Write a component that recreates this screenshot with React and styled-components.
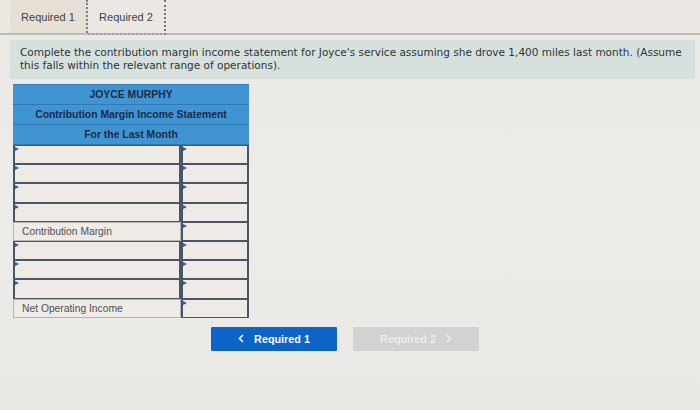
import styled, { createGlobalStyle } from "styled-components";

const Global = createGlobalStyle`
  html, body { margin: 0; padding: 0; background: #ebe9e5; }
  body { width: 700px; height: 410px; overflow: hidden; font-family: "Liberation Sans", Arial, sans-serif; }
`;

const Page = styled.div`
  width: 700px;
  height: 410px;
  display: flex;
  flex-direction: column;
  background: linear-gradient(180deg, #ebe8e3 0%, #edece9 50%, #e9e8e5 100%);
`;

const TabBar = styled.div`
  display: flex;
  height: 33px;
  padding-left: 10px;
  border-bottom: 2px solid #b9bcb8;
`;

const Tab = styled.div`
  width: 76px;
  display: flex;
  align-items: center;
  justify-content: center;
  font-size: 11px;
  color: #3f3f3f;
  background: ${(p) => (p.active ? "#e6dfd6" : "transparent")};
  border-right: ${(p) => (p.active ? "2px dotted #7b7d80" : "2px dotted #6f7276")};
  border-bottom: ${(p) => (p.active ? "none" : "2px dotted #9a9c9e")};
  margin-bottom: ${(p) => (p.active ? "0" : "-2px")};
`;

const Instructions = styled.div`
  margin: 5px 5px 0 10px;
  padding: 6px 10px 7px 10px;
  background: #d6e1de;
  font-family: "DejaVu Sans", Verdana, sans-serif;
  font-size: 10.5px;
  line-height: 13px;
  color: #2e3436;
`;

const Table = styled.div`
  margin: 5px 0 0 13px;
  width: 236px;
  display: flex;
  flex-direction: column;
`;

const HeadRow = styled.div`
  height: 19px;
  display: flex;
  align-items: center;
  justify-content: center;
  background: #3f94d2;
  border-bottom: 1px solid #3378b0;
  color: #1d2a4a;
  font-weight: bold;
  font-size: 10.4px;
  &:first-child { border-top: 1px solid #3378b0; }
  &:last-child { border-bottom: none; height: 20px; }
`;

const Row = styled.div`
  display: grid;
  grid-template-columns: 168px 68px;
  height: 19.2px;
`;

const Cell = styled.div`
  position: relative;
  box-sizing: border-box;
  background: #eeebe6;
  border: 1px solid ${(p) => (p.label ? "#b4b4b2" : "#4b5468")};
  border-width: ${(p) => (p.label ? "1px" : "1px 2px 1px 2px")};
  font-size: 10.3px;
  color: #505050;
  display: flex;
  align-items: center;
  padding-left: 8px;
  &::before {
    content: "";
    display: ${(p) => (p.label ? "none" : "block")};
    position: absolute;
    top: 1px;
    left: 0;
    border-left: 4px solid #2a5fa8;
    border-top: 2px solid transparent;
    border-bottom: 2px solid transparent;
  }
`;

const Buttons = styled.div`
  display: flex;
  gap: 16px;
  margin: 9px 0 0 211px;
`;

const NavButton = styled.button`
  width: 126px;
  height: 24px;
  border: none;
  border-radius: 1px;
  font-family: "Liberation Sans", Arial, sans-serif;
  font-weight: bold;
  font-size: 10.8px;
  display: flex;
  align-items: center;
  justify-content: center;
  gap: 10px;
  background: ${(p) => (p.disabled ? "#d3d2d0" : "#0b64c6")};
  color: ${(p) => (p.disabled ? "#ecebe9" : "#ffffff")};
`;

const Chevron = ({ dir }) => (
  <svg width="6" height="9" viewBox="0 0 6 9">
    <path
      d={dir === "left" ? "M5 1 L1.5 4.5 L5 8" : "M1 1 L4.5 4.5 L1 8"}
      fill="none"
      stroke="currentColor"
      strokeWidth="1.6"
    />
  </svg>
);

const rows = [
  null, null, null, null,
  "Contribution Margin",
  null, null, null,
  "Net Operating Income",
];

export default function App() {
  return (
    <Page>
      <Global />
      <TabBar>
        <Tab active>Required 1</Tab>
        <Tab>Required 2</Tab>
      </TabBar>
      <Instructions>
        Complete the contribution margin income statement for Joyce's service assuming she drove 1,400 miles last month. (Assume
        this falls within the relevant range of operations).
      </Instructions>
      <Table>
        <HeadRow>JOYCE MURPHY</HeadRow>
        <HeadRow>Contribution Margin Income Statement</HeadRow>
        <HeadRow>For the Last Month</HeadRow>
        {rows.map((label, i) => (
          <Row key={i}>
            <Cell label={label ? 1 : 0}>{label}</Cell>
            <Cell />
          </Row>
        ))}
      </Table>
      <Buttons>
        <NavButton>
          <Chevron dir="left" />
          Required 1
        </NavButton>
        <NavButton disabled>
          Required 2
          <Chevron dir="right" />
        </NavButton>
      </Buttons>
    </Page>
  );
}
